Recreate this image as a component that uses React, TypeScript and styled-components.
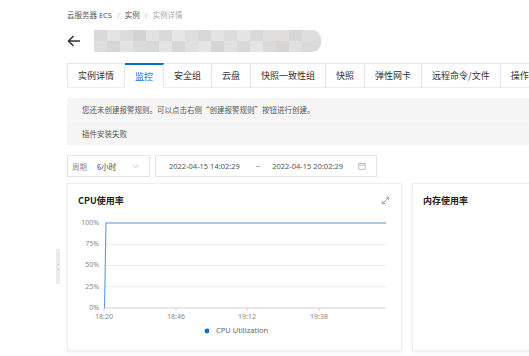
import React from 'react'
import styled, { createGlobalStyle } from 'styled-components'

const GlobalStyle = createGlobalStyle`
  html, body {
    margin: 0;
    padding: 0;
    background: #ffffff;
    overflow: hidden;
  }
  body {
    font-family: "Noto Sans", "Noto Sans CJK SC", sans-serif;
    color: #333333;
  }
`

const Page = styled.div`
  position: relative;
  width: 529px;
  height: 356px;
  overflow: hidden;
`

const Content = styled.div`
  width: 700px;
  padding: 9px 0 0 67px;
  display: flex;
  flex-direction: column;
`

const Breadcrumb = styled.div`
  display: flex;
  align-items: center;
  gap: 5px;
  height: 12px;
  font-size: 7.5px;
  line-height: 12px;
  color: #555;
`

const Crumb = styled.span<{ current?: boolean }>`
  color: ${({ current }) => (current ? '#aaaaaa' : '#555555')};
`

const Slash = styled.span`
  color: #c4c4c4;
`

const TitleRow = styled.div`
  display: flex;
  align-items: center;
  gap: 13px;
  height: 22px;
  margin-top: 9px;
`

const BackArrow = styled.svg`
  width: 14px;
  height: 12px;
  flex: none;
`

const Redacted = styled.div`
  width: 227px;
  height: 22px;
  border-radius: 0 9px 9px 0;
  filter: blur(0.6px);
  background:
    linear-gradient(90deg, #d9d9d9 0 13px, #e4e4e4 13px 26px, #dcdcdc 26px 39px, #d3d3d3 39px 52px, #e2e2e2 52px 65px, #dadada 65px 78px, #e6e6e6 78px 91px, #dedede 91px 104px, #d8d8d8 104px 117px, #e3e3e3 117px 130px, #dcdcdc 130px 143px, #e5e5e5 143px 156px, #d9d9d9 156px 169px, #dfdfdf 169px 182px, #e1ddd9 182px 195px, #d6d6d6 195px 208px, #dddddd 208px 227px) top / 100% 50% no-repeat,
    linear-gradient(90deg, #dedede 0 13px, #d6d6d6 13px 26px, #e2e2e2 26px 39px, #dadada 39px 52px, #d8d8d8 52px 65px, #e4e4e4 65px 78px, #d7d7d7 78px 91px, #e0e0e0 91px 104px, #e5e5e5 104px 117px, #d6d6d6 117px 130px, #e1e1e1 130px 143px, #d9d9d9 143px 156px, #e4e4e4 156px 169px, #dcdad8 169px 182px, #d5d5d5 182px 195px, #e0e0e0 195px 208px, #dadada 208px 227px) bottom / 100% 50% no-repeat;
`

const Tabs = styled.div`
  display: flex;
  margin-top: 11px;
  height: 25px;
`

const Tab = styled.div<{ active?: boolean }>`
  flex: none;
  display: flex;
  align-items: center;
  padding: 0 10px;
  font-family: "Noto Sans CJK SC", sans-serif;
  font-size: 9px;
  color: ${({ active }) => (active ? '#0070cc' : '#333333')};
  background: #ffffff;
  border: 1px solid #e6e6e6;
  border-left: none;
  border-top: ${({ active }) => (active ? '2px solid #0070cc' : '1px solid #e6e6e6')};
  border-bottom: ${({ active }) => (active ? '1px solid #ffffff' : '1px solid #ececec')};
  &:first-child {
    border-left: 1px solid #e6e6e6;
  }
`

const Alert = styled.div`
  margin-top: 10px;
  background: #f5f5f5;
  display: flex;
  flex-direction: column;
  font-family: "Noto Sans CJK SC", sans-serif;
  font-size: 7.5px;
  color: #555555;
`

const AlertRow = styled.div`
  height: 23px;
  display: flex;
  align-items: center;
  padding-left: 15px;
  & + & {
    border-top: 1px solid #fbfbfb;
  }
`

const Filters = styled.div`
  display: flex;
  gap: 5px;
  margin-top: 10px;
  height: 22px;
`

const FilterBox = styled.div<{ w: number }>`
  width: ${({ w }) => w}px;
  box-sizing: border-box;
  border: 1px solid #e3e3e3;
  display: flex;
  align-items: center;
  font-size: 7.5px;
  color: #555555;
  padding: 0 4px;
`

const Label = styled.span`
  color: #888888;
  margin-right: 10px;
  font-family: "Noto Sans CJK SC", sans-serif;
`

const Value = styled.span`
  flex: 1;
  font-family: "Noto Sans CJK SC", sans-serif;
  color: #444444;
`

const DateText = styled.span<{ ml: number }>`
  margin-left: ${({ ml }) => ml}px;
  color: #555555;
`

const Cards = styled.div`
  display: flex;
  gap: 10px;
  margin-top: 6px;
`

const Card = styled.div`
  width: 335px;
  height: 168px;
  box-sizing: border-box;
  background: #ffffff;
  border: 1px solid #efefef;
  box-shadow: 0 1px 3px rgba(0, 0, 0, 0.08);
  display: flex;
  flex-direction: column;
`

const CardHeader = styled.div`
  height: 33px;
  display: flex;
  align-items: center;
  justify-content: space-between;
  padding: 0 11px 0 10px;
`

const CardTitle = styled.span`
  font-family: "Noto Sans CJK SC", sans-serif;
  font-size: 9px;
  font-weight: 700;
  color: #222222;
`

const ChartSvg = styled.svg`
  display: block;
  font-family: "Noto Sans", sans-serif;
`

const Handle = styled.div`
  position: absolute;
  left: 56px;
  top: 249px;
  width: 4px;
  height: 35px;
  background: #ebebeb;
  display: flex;
  align-items: center;
  justify-content: center;
`

const ExpandIcon = () => (
  <svg width="9" height="9" viewBox="0 0 9 9">
    <g stroke="#9a9a9a" strokeWidth="0.9" fill="none">
      <path d="M1.5 7.5 L7.5 1.5" />
      <path d="M5 1.3 H7.7 V4" />
      <path d="M1.3 5 V7.7 H4" />
    </g>
  </svg>
)

const CalendarIcon = () => (
  <svg width="8" height="8" viewBox="0 0 8 8" style={{ marginLeft: 'auto', marginRight: 6 }}>
    <rect x="0.8" y="1.5" width="6.4" height="5.8" fill="none" stroke="#b5b5b5" strokeWidth="0.8" />
    <path d="M0.8 3.2 H7.2 M2.5 0.6 V2.2 M5.5 0.6 V2.2" stroke="#b5b5b5" strokeWidth="0.8" />
  </svg>
)

const Chevron = () => (
  <svg width="7" height="5" viewBox="0 0 7 5" style={{ marginRight: 6 }}>
    <path d="M0.5 0.8 L3.5 3.8 L6.5 0.8" fill="none" stroke="#bbbbbb" strokeWidth="0.8" />
  </svg>
)

const grid = [
  { y: 6, label: '100%' },
  { y: 27.25, label: '75%' },
  { y: 48.5, label: '50%' },
  { y: 69.75, label: '25%' },
  { y: 91, label: '0%' },
]

const ticks = [
  { x: 36, label: '18:20' },
  { x: 108, label: '18:46' },
  { x: 179, label: '19:12' },
  { x: 251, label: '19:38' },
]

const CpuChart = () => (
  <ChartSvg width="333" height="124" viewBox="0 0 333 124">
    {grid.map((g) => (
      <g key={g.label}>
        <line x1="36" x2="318" y1={g.y} y2={g.y} stroke={g.y === 91 ? '#cfcfcf' : '#ececec'} strokeWidth="1" />
        <text x="31" y={g.y} fontSize="7" fill="#888" textAnchor="end" dominantBaseline="middle">
          {g.label}
        </text>
      </g>
    ))}
    {ticks.map((t) => (
      <g key={t.label}>
        <line x1={t.x} x2={t.x} y1="91" y2="94" stroke="#cfcfcf" />
        <text x={t.x} y="100" fontSize="7" fill="#888" textAnchor="middle" dominantBaseline="middle">
          {t.label}
        </text>
      </g>
    ))}
    <path d="M36.5 91 L38 6 L318 6" fill="none" stroke="#5a9be0" strokeWidth="1.1" />
    <circle cx="139" cy="114" r="2.4" fill="#0a6fd0" />
    <text x="148" y="114" fontSize="7.5" fill="#666" dominantBaseline="middle">
      CPU Utilization
    </text>
  </ChartSvg>
)

const tabs = ['实例详情', '监控', '安全组', '云盘', '快照一致性组', '快照', '弹性网卡', '远程命令/文件', '操作记录']

export default function App() {
  return (
    <Page>
      <GlobalStyle />
      <Content>
        <Breadcrumb>
          <Crumb>云服务器 ECS</Crumb>
          <Slash>/</Slash>
          <Crumb>实例</Crumb>
          <Slash>/</Slash>
          <Crumb current>实例详情</Crumb>
        </Breadcrumb>
        <TitleRow>
          <BackArrow viewBox="0 0 14 12">
            <path d="M13 6 H1.5 M6.5 1 L1.5 6 L6.5 11" fill="none" stroke="#333" strokeWidth="1.5" />
          </BackArrow>
          <Redacted />
        </TitleRow>
        <Tabs>
          {tabs.map((t, i) => (
            <Tab key={t} active={i === 1}>
              {t}
            </Tab>
          ))}
        </Tabs>
        <Alert>
          <AlertRow>您还未创建报警规则。可以点击右侧“创建报警规则”按钮进行创建。</AlertRow>
          <AlertRow>插件安装失败</AlertRow>
        </Alert>
        <Filters>
          <FilterBox w={83}>
            <Label>周期</Label>
            <Value>6小时</Value>
            <Chevron />
          </FilterBox>
          <FilterBox w={222}>
            <DateText ml={9}>2022-04-15 14:02:29</DateText>
            <DateText ml={16}>~</DateText>
            <DateText ml={12}>2022-04-15 20:02:29</DateText>
            <CalendarIcon />
          </FilterBox>
        </Filters>
        <Cards>
          <Card>
            <CardHeader>
              <CardTitle>CPU使用率</CardTitle>
              <ExpandIcon />
            </CardHeader>
            <CpuChart />
          </Card>
          <Card>
            <CardHeader>
              <CardTitle>内存使用率</CardTitle>
            </CardHeader>
          </Card>
        </Cards>
      </Content>
      <Handle>
        <svg width="3" height="8" viewBox="0 0 3 8">
          <path d="M2.5 0.5 L0.5 2.5 M0.5 5.5 L2.5 7.5" stroke="#aaa" strokeWidth="0.6" />
        </svg>
      </Handle>
    </Page>
  )
}
